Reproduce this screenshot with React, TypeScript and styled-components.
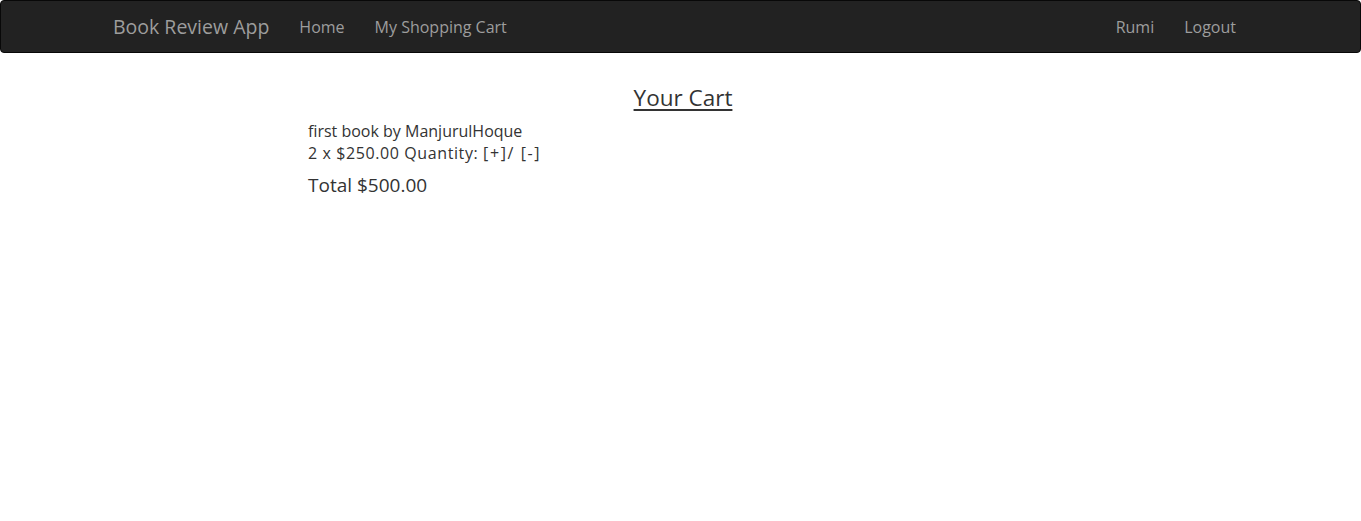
import React from "react";
import styled, { createGlobalStyle } from "styled-components";

const Global = createGlobalStyle`
  html, body { margin: 0; padding: 0; background: #fff; }
  body { font-family: "Open Sans", "Noto Sans", sans-serif; color: #333; }
`;

const Navbar = styled.nav`
  height: 51px;
  background: #222;
  border: 1px solid #080808;
  border-radius: 4px;
  display: flex;
  align-items: center;
  padding: 0 109px 0 97px;
`;

const Brand = styled.a`
  font-size: 19.5px;
  color: #9d9d9d;
  padding: 0 15px;
  text-decoration: none;
`;

const NavList = styled.div<{ $right?: boolean }>`
  display: flex;
  align-items: center;
  margin-left: ${(p) => (p.$right ? "auto" : "0")};
`;

const NavLink = styled.a`
  font-size: 16px;
  color: #9d9d9d;
  padding: 0 15px;
  text-decoration: none;
`;

const Main = styled.main`
  padding: 29px 0 0 308px;
  width: 750px;
`;

const TitleWrap = styled.div`
  width: 750px;
  display: flex;
  justify-content: center;
`;

const Title = styled.h2`
  margin: 0 0 7px;
  font-size: 22.5px;
  font-weight: 400;
  text-decoration: underline;
  text-underline-offset: 3px;
  color: #333;
`;

const Line = styled.div<{ $wide?: boolean }>`
  font-size: 16px;
  line-height: 22px;
  letter-spacing: ${(p) => (p.$wide ? "0.6px" : "0")};
`;

const Controls = styled.span`
  letter-spacing: 1.6px;
`;

const Total = styled.div`
  font-size: 19px;
  margin-top: 8px;
`;

export default function App() {
  return (
    <>
      <Global />
      <Navbar>
        <Brand>Book Review App</Brand>
        <NavList>
          <NavLink>Home</NavLink>
          <NavLink>My Shopping Cart</NavLink>
        </NavList>
        <NavList $right>
          <NavLink>Rumi</NavLink>
          <NavLink>Logout</NavLink>
        </NavList>
      </Navbar>
      <Main>
        <TitleWrap>
          <Title>Your Cart</Title>
        </TitleWrap>
        <Line>first book by ManjurulHoque</Line>
        <Line $wide>
          2 x $250.00 Quantity: <Controls>[+]/ [-]</Controls>
        </Line>
        <Total>Total $500.00</Total>
      </Main>
    </>
  );
}
